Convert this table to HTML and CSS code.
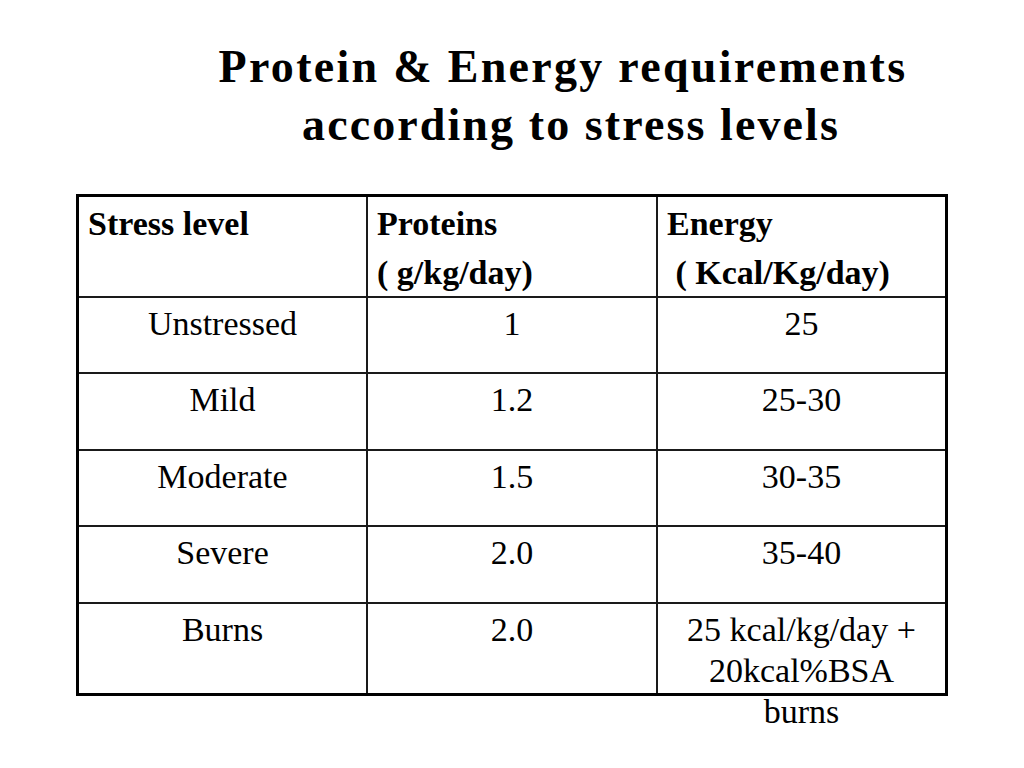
FILE: index.html
```html
<!DOCTYPE html>
<html>
<head>
<meta charset="utf-8">
<link rel="stylesheet" href="styles.css">
</head>
<body>
<div class="slide">
  <h1 class="title"><span class="line">Protein &amp; Energy requirements</span><span class="line second">according to stress levels</span></h1>
  <div class="table" role="table">
    <div class="cell head" role="columnheader">Stress level</div>
    <div class="cell head" role="columnheader">Proteins<br>( g/kg/day)</div>
    <div class="cell head last" role="columnheader">Energy<br>&nbsp;( Kcal/Kg/day)</div>

    <div class="cell" role="cell">Unstressed</div>
    <div class="cell" role="cell">1</div>
    <div class="cell last" role="cell">25</div>

    <div class="cell" role="cell">Mild</div>
    <div class="cell" role="cell">1.2</div>
    <div class="cell last" role="cell">25-30</div>

    <div class="cell" role="cell">Moderate</div>
    <div class="cell" role="cell">1.5</div>
    <div class="cell last" role="cell">30-35</div>

    <div class="cell" role="cell">Severe</div>
    <div class="cell" role="cell">2.0</div>
    <div class="cell last" role="cell">35-40</div>

    <div class="cell bottom" role="cell">Burns</div>
    <div class="cell bottom" role="cell">2.0</div>
    <div class="cell bottom last" role="cell">25 kcal/kg/day +<br>20kcal%BSA<br>burns</div>
  </div>
</div>
</body>
</html>
```

FILE: styles.css
```css
html, body {
  margin: 0;
  padding: 0;
  background: #ffffff;
}

.slide {
  width: 1024px;
  height: 768px;
  overflow: hidden;
  font-family: "Liberation Serif", "Times New Roman", serif;
  color: #000;
}

.title {
  margin: 38px 0 0 0;
  padding-left: 102px;
  text-align: center;
  font-size: 46px;
  line-height: 58px;
  font-weight: bold;
  letter-spacing: 2.3px;
}

.title .line {
  display: block;
}

.title .second {
  padding-left: 16px;
  letter-spacing: 2.1px;
}

.table {
  margin: 40px 0 0 76px;
  width: 866px;
  border: 3px solid #000;
  display: grid;
  grid-template-columns: 289px 290px 287px;
  grid-template-rows: 101px 76px 77px 76px 77px 89px;
  font-size: 34px;
  line-height: 41px;
}

.cell {
  border-right: 2px solid #1a1a1a;
  border-bottom: 2px solid #1a1a1a;
  padding: 5px 10px 0 10px;
  text-align: center;
  overflow: visible;
  white-space: nowrap;
}

.cell.last {
  border-right: none;
}

.cell.bottom {
  border-bottom: none;
}

.cell.head {
  text-align: left;
  font-weight: bold;
  padding-left: 9px;
  padding-top: 2px;
  line-height: 49px;
}
```
